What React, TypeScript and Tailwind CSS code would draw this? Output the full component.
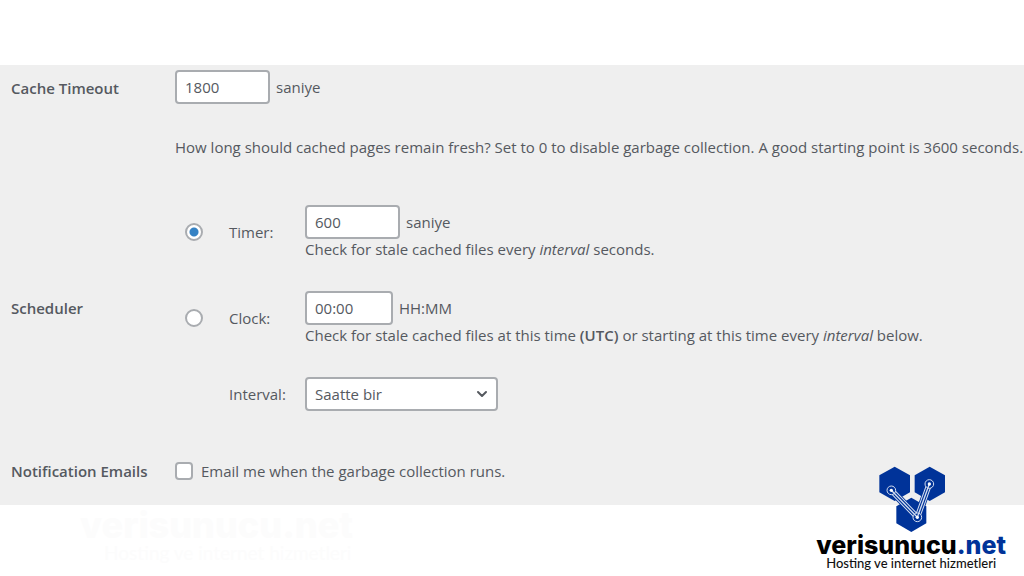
import React, { useState } from 'react';
import { ChevronDown } from 'lucide-react';

const fieldClass =
  'h-[34px] rounded border-2 border-[#a9acb0] bg-white px-2 text-[15px] leading-5 text-[#55595f] outline-none focus:border-[#2271b1]';

const radioClass =
  'm-0 h-[18px] w-[18px] shrink-0 appearance-none rounded-full border-2 border-[#a9acb0] bg-white checked:bg-[radial-gradient(circle,#3582c4_4px,#ffffff_5px)]';

const LogoMark = () => (
  <svg viewBox="0 0 240 225" className="h-[75px] w-20" aria-hidden="true">
    <g fill="#003399">
      <path d="M71 20 L117 46 V97 L71 123 L25 97 V46 Z" />
      <path d="M176 20 L222 46 V97 L176 123 L131 97 V46 Z" />
      <path d="M121 113 L166 139 V190 L121 216 L76 190 V139 Z" />
    </g>
    <g fill="none" strokeLinecap="round" strokeLinejoin="round">
      <path d="M61 91 L139 172 L175 72" stroke="#003399" strokeWidth="22" />
      <path d="M61 91 L139 172 L175 72" stroke="#d5def0" strokeWidth="17" />
      <path d="M61 91 L139 172 L175 72" stroke="#003399" strokeWidth="11" />
    </g>
    <g fill="#003399" stroke="#d5def0" strokeWidth="3">
      <circle cx="61" cy="91" r="13" />
      <circle cx="175" cy="72" r="13" />
      <circle cx="139" cy="172" r="13" />
    </g>
    <path d="M61 91 L139 172 L175 72" fill="none" stroke="#d5def0" strokeWidth="4" />
    <g fill="#ffffff">
      <circle cx="61" cy="91" r="5" />
      <circle cx="175" cy="72" r="5" />
      <circle cx="139" cy="172" r="5" />
    </g>
  </svg>
);

const Brand = () => (
  <div className="absolute right-[18px] -bottom-[66px] flex flex-col items-center font-['Inter',sans-serif]">
    <LogoMark />
    <p className="text-[25px] leading-5 font-extrabold text-black">
      verisunucu<span className="text-[#003399]">.net</span>
    </p>
    <p className="font-['Lato',sans-serif] text-[13px] leading-4 font-medium text-[#111111]">Hosting ve internet hizmetleri</p>
  </div>
);

const App: React.FC = () => {
  const [timeout, setTimeoutValue] = useState('1800');
  const [schedule, setSchedule] = useState('timer');
  const [timer, setTimer] = useState('600');
  const [clock, setClock] = useState('00:00');
  const [notify, setNotify] = useState(false);

  return (
    <div className="min-h-screen overflow-hidden bg-white font-['Open_Sans',sans-serif] text-[15px] leading-5 text-[#55595f]">
      <main className="relative mt-[65px] bg-[#efefef] pt-[5px] pr-4 pb-6 pl-[11px]">
        <form onSubmit={(e) => e.preventDefault()}>
          <div className="grid grid-cols-[164px_1fr]">
            <label htmlFor="cache-timeout" className="pt-2 font-semibold">
              Cache Timeout
            </label>
            <div>
              <div className="flex items-center gap-1.5">
                <input
                  id="cache-timeout"
                  type="text"
                  value={timeout}
                  onChange={(e) => setTimeoutValue(e.target.value)}
                  className={`${fieldClass} w-[95px]`}
                />
                <span>saniye</span>
              </div>
              <p className="mt-[33px] lg:whitespace-nowrap">
                How long should cached pages remain fresh? Set to 0 to disable garbage collection. A good starting point is 3600 seconds.
              </p>
            </div>
          </div>

          <div role="radiogroup" aria-labelledby="scheduler" className="mt-12 grid grid-cols-[164px_1fr] items-center">
            <h2 id="scheduler" className="font-semibold">
              Scheduler
            </h2>
            <div className="grid grid-cols-[44px_76px_1fr] items-center gap-y-8 pl-2.5">
              <input
                id="timer"
                type="radio"
                name="schedule"
                checked={schedule === 'timer'}
                onChange={() => setSchedule('timer')}
                className={radioClass}
              />
              <label htmlFor="timer">Timer:</label>
              <div>
                <div className="flex items-center gap-1.5">
                  <input
                    type="text"
                    aria-label="Timer interval"
                    value={timer}
                    onChange={(e) => setTimer(e.target.value)}
                    className={`${fieldClass} w-[95px]`}
                  />
                  <span>saniye</span>
                </div>
                <p>
                  Check for stale cached files every <em>interval</em> seconds.
                </p>
              </div>

              <input
                id="clock"
                type="radio"
                name="schedule"
                checked={schedule === 'clock'}
                onChange={() => setSchedule('clock')}
                className={radioClass}
              />
              <label htmlFor="clock">Clock:</label>
              <div>
                <div className="flex items-center gap-1.5">
                  <input
                    type="text"
                    aria-label="Clock time"
                    value={clock}
                    onChange={(e) => setClock(e.target.value)}
                    className={`${fieldClass} w-[88px]`}
                  />
                  <span>HH:MM</span>
                </div>
                <p>
                  Check for stale cached files at this time <strong className="font-semibold">(UTC)</strong> or starting at this time every{' '}
                  <em>interval</em> below.
                </p>
              </div>

              <label htmlFor="interval" className="col-start-2">
                Interval:
              </label>
              <div className="relative w-[193px]">
                <select id="interval" className={`${fieldClass} w-full appearance-none`}>
                  <option>Saatte bir</option>
                </select>
                <ChevronDown className="pointer-events-none absolute top-[9px] right-2 h-4 w-4" strokeWidth={3} />
              </div>
            </div>
          </div>

          <div className="mt-[50px] grid grid-cols-[164px_1fr] items-center">
            <h2 className="font-semibold">Notification Emails</h2>
            <div className="flex items-center gap-2">
              <input
                id="notify"
                type="checkbox"
                checked={notify}
                onChange={(e) => setNotify(e.target.checked)}
                className="m-0 h-[18px] w-[18px] appearance-none rounded border-2 border-[#a9acb0] bg-white checked:bg-[#3582c4]"
              />
              <label htmlFor="notify">Email me when the garbage collection runs.</label>
            </div>
          </div>
        </form>
        <Brand />
      </main>

      <div className="pt-0.5 pl-20 font-['Inter',sans-serif] text-[#fcfcfc]" aria-hidden="true">
        <p className="text-4xl leading-9 font-extrabold">verisunucu.net</p>
        <p className="pl-6 font-['Lato',sans-serif] text-[19px] leading-5">Hosting ve internet hizmetleri</p>
      </div>
    </div>
  );
};

export default App;
